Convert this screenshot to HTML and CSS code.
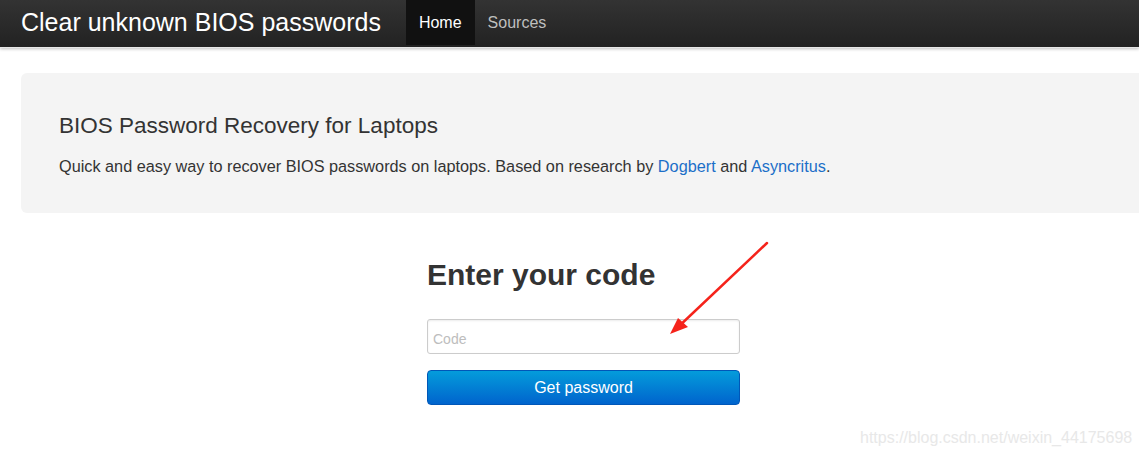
FILE: index.html
```html
<!DOCTYPE html>
<html>
<head>
<meta charset="utf-8">
<link rel="stylesheet" href="styles.css">
</head>
<body>
<div class="navbar">
  <div class="container nav-inner">
    <a class="brand">Clear unknown BIOS passwords</a>
    <ul class="nav">
      <li class="active"><a>Home</a></li>
      <li><a>Sources</a></li>
    </ul>
  </div>
</div>
<div class="container">
  <div class="jumbotron">
    <h2>BIOS Password Recovery for Laptops</h2>
    <p>Quick and easy way to recover BIOS passwords on laptops. Based on research by <a>Dogbert</a> and <a>Asyncritus</a>.</p>
  </div>
  <div class="form-wrap">
    <form class="code-form">
      <h1>Enter your code</h1>
      <input type="text" placeholder="Code">
      <button type="button">Get password</button>
    </form>
  </div>
</div>
<svg class="arrow" width="120" height="110" viewBox="0 0 120 110">
  <path d="M117 2 L26 88" stroke="#f5231b" stroke-width="2.5" stroke-linecap="round" fill="none"/>
  <path d="M20 93 L28 77 L38 86 Z" fill="#f5231b"/>
</svg>
<div class="watermark">https://blog.csdn.net/weixin_44175698</div>
</body>
</html>
```

FILE: styles.css
```css
html, body {
  margin: 0;
  padding: 0;
  overflow: hidden;
  background: #fff;
  font-family: "Liberation Sans", Arial, sans-serif;
  color: #333;
}
.container {
  margin-left: 21px;
  width: 1125px;
}
.navbar {
  height: 47px;
  background: linear-gradient(#333333, #222222);
  box-shadow: 0 1px 3px rgba(0,0,0,0.25);
  border-bottom: 1px solid #e6e6e6;
}
.nav-inner {
  display: flex;
  align-items: stretch;
  height: 47px;
}
.brand {
  color: #fff;
  font-size: 25px;
  line-height: 44px;
  margin-right: 25px;
}
.nav {
  display: flex;
  list-style: none;
  margin: 0;
  padding: 0;
}
.nav li a {
  display: block;
  padding: 0 13px 0 13px;
  line-height: 45px;
  font-size: 16px;
  color: #bfbfbf;
}
.nav li.active a {
  background: #111;
  color: #fff;
}
.jumbotron {
  margin-top: 25px;
  background: #f4f4f4;
  border-radius: 6px;
  padding: 39px 38px 25px;
  height: 76px;
  width: 1180px;
}
.jumbotron h2 {
  margin: 0 0 14px;
  font-size: 22.5px;
  font-weight: normal;
  line-height: 28px;
  color: #333;
}
.jumbotron p {
  margin: 0;
  font-size: 16.25px;
  line-height: 24px;
  color: #333;
}
.jumbotron a {
  color: #1b6fc8;
}
.form-wrap {
  display: flex;
  justify-content: center;
  padding-top: 41px;
}
.code-form {
  width: 313px;
  display: flex;
  flex-direction: column;
}
.code-form h1 {
  margin: 0 0 23px;
  font-size: 30px;
  line-height: 42px;
  font-weight: bold;
  color: #333;
}
.code-form input {
  box-sizing: border-box;
  width: 313px;
  height: 35px;
  border: 1px solid #ccc;
  border-radius: 3px;
  padding: 4px 5px 0;
  font-family: "Liberation Sans", Arial, sans-serif;
  font-size: 14px;
  box-shadow: inset 0 1px 2px rgba(0,0,0,0.08);
  margin: 0 0 16px;
}
.code-form input::placeholder {
  color: #bdbdbd;
}
.code-form button {
  width: 313px;
  height: 35px;
  border: 1px solid #0057b8;
  border-radius: 4px;
  background: linear-gradient(#049cdb, #0064cd);
  color: #fff;
  font-family: "Liberation Sans", Arial, sans-serif;
  font-size: 16px;
  padding: 0;
}
.arrow {
  position: absolute;
  left: 650px;
  top: 241px;
}
.watermark {
  position: absolute;
  left: 860px;
  top: 429px;
  font-size: 16px;
  color: #e8e8e8;
}
```
